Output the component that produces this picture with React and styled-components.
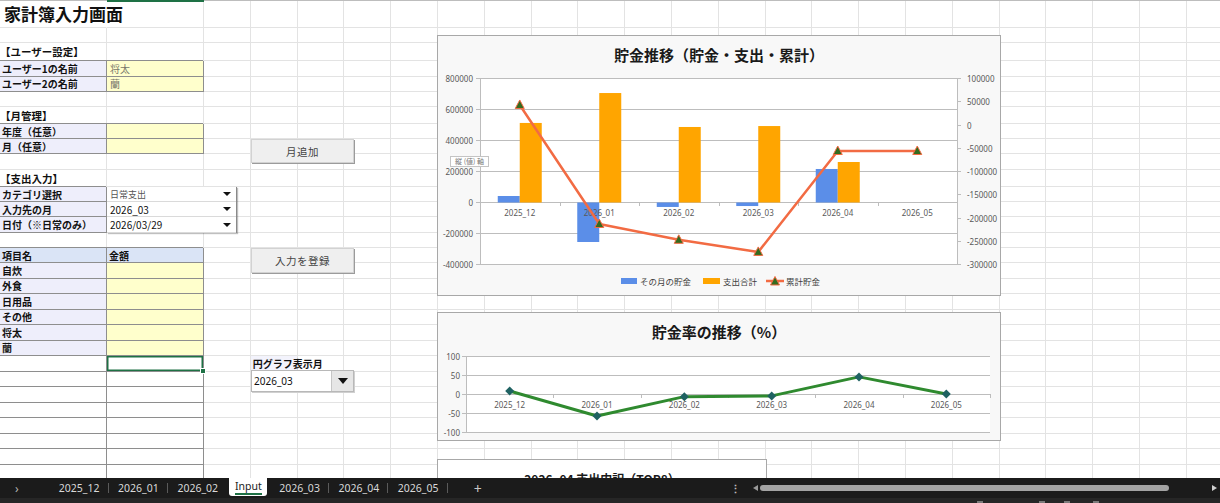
import React from 'react';
import styled, { createGlobalStyle, css } from 'styled-components';

const JP = `"Noto Sans CJK JP", "Noto Sans", sans-serif`;
const NUM = `"Noto Sans", "Liberation Sans", sans-serif`;

const GlobalStyle = createGlobalStyle`
  html, body { margin: 0; padding: 0; background: #ffffff; }
  body { overflow: hidden; font-family: ${JP}; }
  #root { width: 1220px; height: 503px; }
`;

const Frame = styled.div`
  width: 1220px;
  height: 503px;
  display: flex;
  flex-direction: column;
  overflow: hidden;
  background: #ffffff;
`;

const SheetArea = styled.div`
  position: relative;
  height: 478px;
  flex: none;
  overflow: hidden;
`;

const HeaderEdge = styled.div`
  position: absolute;
  left: 0;
  top: 0;
  width: 100%;
  height: 1px;
  background: #bdbdbd;
  z-index: 4;
  &::after {
    content: '';
    position: absolute;
    left: 107px;
    top: 0;
    width: 97px;
    height: 2px;
    background: #1e7145;
  }
`;

const ROWS = [28, 15, 18, 15.5, 15.5, 15, 17, 15, 15, 16, 17, 15, 15, 16, 15, 15,
  15.5, 15.5, 15.5, 15.5, 15.5, 15.5, 15.5, 15.5, 15.5, 15.5, 15.5, 15.5, 15.5, 15.5];
const COL_COUNT = 24;

const Grid = styled.div`
  display: grid;
  grid-template-columns: 107px 97px repeat(22, 46.8px);
  grid-template-rows: ${ROWS.map((h) => `${h}px`).join(' ')};
  width: max-content;
`;

const boxedKinds = ['label', 'value', 'head', 'box', 'active'];

const kindStyles = {
  plain: css``,
  title: css`
    font-size: 17px;
    font-weight: 700;
    color: #111;
    padding-left: 4px;
    position: relative;
    z-index: 1;
    border-right-color: transparent;
  `,
  section: css`
    font-size: 10.5px;
    font-weight: 700;
    padding-left: 0;
  `,
  label: css`
    background: #eeeefb;
    font-weight: 700;
  `,
  value: css`
    background: #ffffcc;
    color: #77776a;
    padding-left: 3px;
  `,
  head: css`
    background: #dae4f6;
    font-weight: 700;
  `,
  box: css`
    background: #ffffff;
  `,
  active: css`
    background: #ffffff;
    position: relative;
    box-shadow: -1px -1px 0 #8e8e8e, inset 0 0 0 1.5px #1e7145;
    &::after {
      content: '';
      position: absolute;
      right: -3px;
      bottom: -3px;
      width: 4px;
      height: 4px;
      background: #1e7145;
      border: 1px solid #ffffff;
      z-index: 2;
    }
  `,
  chip: css`
    background: #f3f3fc;
    font-weight: 700;
    position: relative;
    z-index: 1;
  `,
};

const Cell = styled.div`
  box-sizing: border-box;
  min-width: 0;
  display: flex;
  align-items: center;
  padding-left: 2px;
  white-space: nowrap;
  overflow: visible;
  font-family: ${JP};
  font-size: 10px;
  color: #111;
  border-right: 1px solid ${(p) => (p.$boxed ? '#8e8e8e' : '#e3e3e3')};
  border-bottom: 1px solid ${(p) => (p.$boxed ? '#8e8e8e' : '#e3e3e3')};
  ${(p) => p.$boxed && 'box-shadow: -1px -1px 0 #8e8e8e;'}
  ${(p) => kindStyles[p.$kind]}
`;

const L = (text) => ({ kind: 'label', text });
const V = (text) => ({ kind: 'value', text });

const ITEMS = ['自炊', '外食', '日用品', 'その他', '将太', '蘭'];

const CONTENT = {
  0: [{ kind: 'title', text: '家計簿入力画面' }],
  2: [{ kind: 'section', text: '【ユーザー設定】' }],
  3: [L('ユーザー1の名前'), V('将太')],
  4: [L('ユーザー2の名前'), V('蘭')],
  6: [{ kind: 'section', text: '【月管理】' }],
  7: [L('年度（任意）'), V('')],
  8: [L('月（任意）'), V('')],
  10: [{ kind: 'section', text: '【支出入力】' }],
  11: [L('カテゴリ選択')],
  12: [L('入力先の月')],
  13: [L('日付（※日常のみ）')],
  15: [{ kind: 'head', text: '項目名' }, { kind: 'head', text: '金額' }],
  22: [{ kind: 'box' }, { kind: 'active' }, null, { kind: 'chip', text: '円グラフ表示月' }],
};
ITEMS.forEach((name, i) => {
  CONTENT[16 + i] = [L(name), V('')];
});
for (let r = 23; r < ROWS.length; r += 1) CONTENT[r] = [{ kind: 'box' }, { kind: 'box' }];

function Sheet() {
  const cells = [];
  ROWS.forEach((_, r) => {
    const row = CONTENT[r] || [];
    for (let c = 0; c < COL_COUNT; c += 1) {
      const spec = row[c] || { kind: 'plain' };
      cells.push(
        <Cell key={`${r}-${c}`} $kind={spec.kind} $boxed={boxedKinds.includes(spec.kind)}>
          {spec.text}
        </Cell>
      );
    }
  });
  return <Grid>{cells}</Grid>;
}

/* ---------- floating objects over the sheet ---------- */

const place = css`
  position: absolute;
  left: ${(p) => p.$x}px;
  top: ${(p) => p.$y}px;
  width: ${(p) => p.$w}px;
  ${(p) => (p.$h ? `height: ${p.$h}px;` : '')}
  box-sizing: border-box;
  z-index: 3;
`;

const ActionButton = styled.div`
  ${place}
  display: flex;
  align-items: center;
  justify-content: center;
  background: #efefef;
  border: 1px solid #d2d2d2;
  box-shadow: 1px 1px 0 #9b9b9b;
  font-family: ${JP};
  font-size: 10.5px;
  color: #444;
  letter-spacing: 0.5px;
`;

const ComboStack = styled.div`
  ${place}
  display: flex;
  flex-direction: column;
  background: #ffffff;
  border-right: 1px solid #8a8a8a;
  box-shadow: 1px 1px 1px rgba(0, 0, 0, 0.25);
`;

const ComboRow = styled.div`
  box-sizing: border-box;
  height: ${(p) => p.$h}px;
  display: flex;
  align-items: center;
  justify-content: space-between;
  padding: 0 5px 0 3px;
  border-bottom: 1px solid #dadada;
  font-family: ${JP};
  font-size: ${(p) => (p.$muted ? 9 : 10)}px;
  color: ${(p) => (p.$muted ? '#555' : '#111')};
`;

const DownArrow = styled.span`
  width: 0;
  height: 0;
  border-left: ${(p) => p.$s}px solid transparent;
  border-right: ${(p) => p.$s}px solid transparent;
  border-top: ${(p) => Math.round(p.$s * 1.1)}px solid #111;
`;

const PieSelect = styled.div`
  ${place}
  display: flex;
  align-items: stretch;
  background: #ffffff;
  border: 1px solid #b8b8b8;
  box-shadow: 1px 1px 0 #d0d0d0;
`;

const PieValue = styled.div`
  flex: 1;
  display: flex;
  align-items: center;
  padding-left: 2px;
  font-family: ${NUM};
  font-size: 10px;
  color: #111;
`;

const PieArrowBox = styled.div`
  width: 21px;
  display: flex;
  align-items: center;
  justify-content: center;
  background: #e6e6e6;
  border-left: 1px solid #c6c6c6;
`;

const ChartPanel = styled.div`
  ${place}
  display: flex;
  flex-direction: column;
  background: ${(p) => p.$bg || '#f8f8f8'};
  border: 1px solid #a8a8a8;
  overflow: hidden;
`;

const ChartTitle = styled.div`
  flex: none;
  height: ${(p) => p.$h}px;
  display: flex;
  align-items: ${(p) => (p.$top ? 'flex-start' : 'center')};
  justify-content: center;
  padding-top: ${(p) => p.$pt || 0}px;
  box-sizing: border-box;
  font-family: ${JP};
  font-size: ${(p) => p.$size}px;
  font-weight: 700;
  color: #1a1a1a;
  white-space: nowrap;
`;

const CATS = ['2025_12', '2026_01', '2026_02', '2026_03', '2026_04', '2026_05'];
const SMALL = { fontFamily: NUM, fontSize: 8, fill: '#595959' };
const LEGEND = { fontFamily: JP, fontSize: 8.5, fill: '#404040' };

function SavingsChart() {
  const X0 = 42;
  const X1 = 519;
  const band = (X1 - X0) / 6;
  const cx = (i) => X0 + band * (i + 0.5);
  const yL = (v) => 126 - (v * 31) / 200000;
  const yR = (v) => 48.5 - (v * 23.25) / 50000;
  const left = [800000, 600000, 400000, 200000, 0, -200000, -400000];
  const right = [100000, 50000, 0, -50000, -100000, -150000, -200000, -250000, -300000];
  const saving = [38700, -258000, -32000, -26000, 213000, 0];
  const spend = [510000, 703000, 484000, 490000, 258000, 0];
  const cumul = [42000, -214000, -248000, -274000, -57000, -57000];
  const pts = cumul.map((v, i) => `${cx(i)},${yR(v)}`).join(' ');
  const tri = (x, y, k) => (
    <polygon key={k} points={`${x},${y - 5} ${x - 4.5},${y + 3.5} ${x + 4.5},${y + 3.5}`}
      fill="#336b1f" stroke="#f26b43" strokeWidth="1" />
  );
  const bar = (v, x, color, k) => (v === 0 ? null : (
    <rect key={k} x={x} width={22} y={Math.min(yL(v), 126.5)}
      height={Math.abs(yL(v) - 126.5)} fill={color} />
  ));
  return (
    <svg width="562" height="222" viewBox="0 0 562 222" style={{ display: 'block' }}>
      <g transform="translate(0,3)">
        <rect x={X0} y={2} width={X1 - X0} height={186} fill="#ffffff" />
        {left.map((v) => {
          const y = Math.round(yL(v)) + 0.5;
          return (
            <g key={v}>
              <line x1={X0 - 4} x2={X1} y1={y} y2={y} stroke="#bdbdbd" />
              <text x={35} y={y + 3} textAnchor="end" style={SMALL}>{v}</text>
            </g>
          );
        })}
        <line x1={X0 + 0.5} x2={X0 + 0.5} y1={2} y2={189} stroke="#bdbdbd" />
        <line x1={X1 + 0.5} x2={X1 + 0.5} y1={2} y2={189} stroke="#bdbdbd" />
        {right.map((v) => {
          const y = Math.round(yR(v)) + 0.5;
          return (
            <g key={v}>
              <line x1={X1} x2={X1 + 4} y1={y} y2={y} stroke="#bdbdbd" />
              <text x={529} y={y + 3} style={SMALL}>{v}</text>
            </g>
          );
        })}
        {[0, 1, 2, 3, 4, 5, 6].map((i) => {
          const x = Math.round(X0 + band * i) + 0.5;
          return <line key={i} x1={x} x2={x} y1={126} y2={130} stroke="#bdbdbd" />;
        })}
        {saving.map((v, i) => bar(v, cx(i) - 22, '#5b8ee8', `s${i}`))}
        {spend.map((v, i) => bar(v, cx(i), '#ffa500', `e${i}`))}
        {CATS.map((c, i) => (
          <text key={c} x={cx(i)} y={140} textAnchor="middle" style={SMALL}>{c}</text>
        ))}
        <polyline points={pts} fill="none" stroke="#f26b43" strokeWidth="2.5" strokeLinejoin="round" />
        {cumul.map((v, i) => tri(cx(i), yR(v), `t${i}`))}
        <rect x={12.5} y={80.5} width={38} height={10} fill="#ffffff" stroke="#c4c4c4" />
        <text x={31.5} y={88} textAnchor="middle" style={{ fontFamily: JP, fontSize: 7, fill: '#777' }}>縦 (値) 軸</text>
        <rect x={183} y={202} width={16} height={6} fill="#5b8ee8" />
        <text x={202} y={208.5} style={LEGEND}>その月の貯金</text>
        <rect x={265} y={202} width={17} height={6} fill="#ffa500" />
        <text x={285} y={208.5} style={LEGEND}>支出合計</text>
        <line x1={328} x2={346} y1={205} y2={205} stroke="#f26b43" strokeWidth="2.5" />
        {tri(337, 205.5, 'legend')}
        <text x={348} y={208.5} style={LEGEND}>累計貯金</text>
      </g>
    </svg>
  );
}

function RateChart() {
  const X0 = 28;
  const X1 = 552;
  const band = (X1 - X0) / 6;
  const cx = (i) => X0 + band * (i + 0.5);
  const yv = (v) => 41 - (v * 19) / 50;
  const ticks = [100, 50, 0, -50, -100];
  const rate = [8, -58, -7, -5, 45, 0];
  const pts = rate.map((v, i) => `${cx(i)},${yv(v)}`).join(' ');
  return (
    <svg width="562" height="90" viewBox="0 0 562 90" style={{ display: 'block' }}>
      <g transform="translate(0,3)">
        <rect x={X0} y={3} width={X1 - X0} height={76} fill="#ffffff" />
        {ticks.map((v) => {
          const y = Math.round(yv(v)) + 0.5;
          return (
            <g key={v}>
              <line x1={X0 - 4} x2={X1} y1={y} y2={y} stroke="#bdbdbd" />
              <text x={22} y={y + 3} textAnchor="end" style={SMALL}>{v}</text>
            </g>
          );
        })}
        <line x1={X0 + 0.5} x2={X0 + 0.5} y1={3} y2={80} stroke="#bdbdbd" />
        {[0, 1, 2, 3, 4, 5, 6].map((i) => {
          const x = Math.round(X0 + band * i) + 0.5;
          return <line key={i} x1={x} x2={x} y1={41} y2={45} stroke="#bdbdbd" />;
        })}
        {CATS.map((c, i) => (
          <text key={c} x={cx(i)} y={55} textAnchor="middle" style={SMALL}>{c}</text>
        ))}
        <polyline points={pts} fill="none" stroke="#2f8a2f" strokeWidth="3" strokeLinejoin="round" />
        {rate.map((v, i) => {
          const x = cx(i);
          const y = yv(v);
          return (
            <polygon key={i} points={`${x},${y - 4.5} ${x + 4.5},${y} ${x},${y + 4.5} ${x - 4.5},${y}`}
              fill="#1f6262" />
          );
        })}
      </g>
    </svg>
  );
}

/* ---------- bottom sheet tab bar ---------- */

const TabBar = styled.div`
  flex: none;
  height: 20px;
  display: flex;
  align-items: stretch;
  background: #1b1b1b;
  font-family: ${NUM};
  font-size: 10.5px;
  color: #d9d9d9;
`;

const NavArrow = styled.div`
  width: 49.5px;
  display: flex;
  align-items: center;
  padding-left: 15px;
  box-sizing: border-box;
  color: #b5b5b5;
  font-size: 12px;
`;

const Tab = styled.div`
  position: relative;
  width: 59.3px;
  display: flex;
  align-items: center;
  justify-content: center;
  &::after {
    content: '';
    display: ${(p) => (p.$sep ? 'block' : 'none')};
    position: absolute;
    right: 0;
    top: 5px;
    width: 1px;
    height: 10px;
    background: #5a5a5a;
  }
`;

const ActiveTab = styled.div`
  width: 38px;
  margin: 0 2.5px 2px 2px;
  display: flex;
  align-items: center;
  justify-content: center;
  background: #ffffff;
  border-radius: 0 0 3px 3px;
  color: #222;
`;

const ActiveLabel = styled.span`
  line-height: 13px;
  border-bottom: 2px solid #1e7145;
`;

const AddTab = styled.div`
  width: 60px;
  display: flex;
  align-items: center;
  justify-content: center;
  color: #c8c8c8;
  font-size: 14px;
`;

const ScrollGroup = styled.div`
  margin-left: auto;
  width: 492px;
  display: flex;
  align-items: center;
`;

const Kebab = styled.div`
  width: 14px;
  text-align: center;
  color: #bcbcbc;
  font-size: 11px;
  font-weight: 700;
`;

const ScrollArrow = styled.span`
  width: 0;
  height: 0;
  border-top: 3.5px solid transparent;
  border-bottom: 3.5px solid transparent;
  ${(p) => (p.$dir === 'left'
    ? 'border-right: 5px solid #9a9a9a; margin-left: 11px;'
    : 'border-left: 5px solid #cfcfcf; margin-left: 43px;')}
`;

const ScrollThumb = styled.div`
  width: 409px;
  height: 6px;
  margin-left: 2px;
  border-radius: 3px;
  background: #a3a3a3;
`;

const StatusStrip = styled.div`
  flex: none;
  height: 5px;
  background: #262626;
  display: flex;
  align-items: flex-end;
  padding-left: 977px;
`;

const StatusMark = styled.span`
  width: 6px;
  height: 2px;
  background: #7a7a7a;
  margin-right: ${(p) => p.$gap}px;
`;

export default function App() {
  return (
    <Frame>
      <GlobalStyle />
      <SheetArea>
        <HeaderEdge />
        <Sheet />

        <ComboStack $x={107} $y={187} $w={130}>
          <ComboRow $h={15} $muted>日常支出<DownArrow $s={4} /></ComboRow>
          <ComboRow $h={15}>2026_03<DownArrow $s={4} /></ComboRow>
          <ComboRow $h={16}>2026/03/29<DownArrow $s={4} /></ComboRow>
        </ComboStack>

        <ActionButton $x={251} $y={139} $w={103} $h={24}>月追加</ActionButton>
        <ActionButton $x={251} $y={248} $w={103} $h={25}>入力を登録</ActionButton>

        <PieSelect $x={251} $y={370} $w={103} $h={22}>
          <PieValue>2026_03</PieValue>
          <PieArrowBox><DownArrow $s={5.5} /></PieArrowBox>
        </PieSelect>

        <ChartPanel $x={437} $y={35} $w={564} $h={261}>
          <ChartTitle $h={37} $size={15}>貯金推移（貯金・支出・累計）</ChartTitle>
          <SavingsChart />
        </ChartPanel>

        <ChartPanel $x={437} $y={312} $w={564} $h={129}>
          <ChartTitle $h={37} $size={15}>貯金率の推移（%）</ChartTitle>
          <RateChart />
        </ChartPanel>

        <ChartPanel $x={437} $y={459} $w={330} $h={120} $bg="#ffffff">
          <ChartTitle $h={40} $size={12} $top $pt={10}>2026_04 支出内訳（TOP8）</ChartTitle>
        </ChartPanel>
      </SheetArea>

      <TabBar>
        <NavArrow>›</NavArrow>
        <Tab $sep>2025_12</Tab>
        <Tab $sep>2026_01</Tab>
        <Tab>2026_02</Tab>
        <ActiveTab><ActiveLabel>Input</ActiveLabel></ActiveTab>
        <Tab $sep>2026_03</Tab>
        <Tab $sep>2026_04</Tab>
        <Tab $sep>2026_05</Tab>
        <AddTab>+</AddTab>
        <ScrollGroup>
          <Kebab>⋮</Kebab>
          <ScrollArrow $dir="left" />
          <ScrollThumb />
          <ScrollArrow $dir="right" />
        </ScrollGroup>
      </TabBar>
      <StatusStrip>
        <StatusMark $gap={56} />
        <StatusMark $gap={19} />
        <StatusMark $gap={23} />
        <StatusMark $gap={0} />
      </StatusStrip>
    </Frame>
  );
}
